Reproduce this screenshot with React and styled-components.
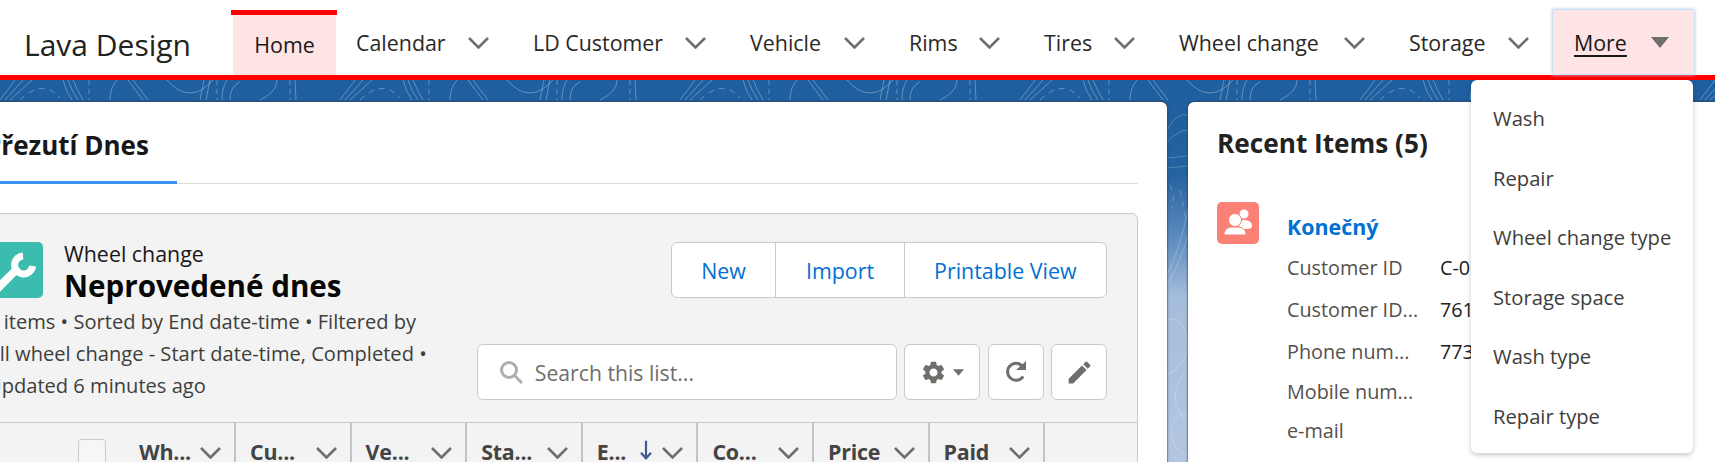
import React from 'react'
import styled, { createGlobalStyle } from 'styled-components'
import { MdSettings, MdEdit } from 'react-icons/md'

const GlobalStyle = createGlobalStyle`
  html, body { margin: 0; padding: 0; background: #fff; }
  body { font-family: "Open Sans", "Noto Sans", sans-serif; color: #181818; }
`

const Page = styled.div`
  position: relative;
  width: 1715px;
  height: 462px;
  overflow: hidden;
`
const NavBar = styled.nav`
  position: relative;
  z-index: 2;
  display: flex;
  align-items: stretch;
  height: 80px;
  box-sizing: border-box;
  border-bottom: 5px solid #f00;
  padding-top: 10px;
  background: #fff;
`
const Brand = styled.div`
  width: 233px;
  box-sizing: border-box;
  padding-left: 24px;
  font-size: 30px;
  line-height: 70px;
  color: #222;
`
const HomeTab = styled.div`
  position: relative;
  width: 103px;
  text-align: center;
  font-size: 21.4px;
  line-height: 60px;
  margin-top: 5px;
  background: #fee4e4;
  &::before {
    content: '';
    position: absolute;
    left: -2px;
    right: -1px;
    top: -5px;
    height: 5px;
    background: #f00;
  }
`
const NavItem = styled.div`
  display: flex;
  align-items: center;
  justify-content: space-between;
  box-sizing: border-box;
  width: ${p => p.$w}px;
  padding: 0 24px 0 20px;
  font-size: 21.4px;
  color: #2b2826;
`
const MoreTab = styled.div`
  position: relative;
  display: flex;
  align-items: center;
  justify-content: space-between;
  box-sizing: border-box;
  width: 141px;
  height: 64px;
  padding: 0 25px 0 21px;
  font-size: 21.4px;
  background: #fee4e4;
  box-shadow: 0 0 3px 1px #a6d0f5;
  span { text-decoration: underline; text-underline-offset: 4px; }
`
const MoreMenu = styled.ul`
  position: absolute;
  top: 70px;
  right: 1px;
  width: 222px;
  height: 373px;
  box-sizing: border-box;
  margin: 0;
  padding: 9px 0 0 22px;
  list-style: none;
  background: #fff;
  border-radius: 6px;
  box-shadow: 0 2px 5px rgba(0, 0, 0, 0.22);
  font-size: 20.2px;
  color: #3e3e3c;
`
const MenuItem = styled.li`
  height: 59.6px;
  line-height: 59.6px;
`
const Backdrop = styled.svg`
  position: absolute;
  left: 0;
  top: 80px;
  width: 1715px;
  height: 382px;
`
const Main = styled.main`
  position: relative;
  z-index: 1;
  display: flex;
  gap: 21px;
  margin-left: -63px;
  padding-top: 22px;
`
const Card = styled.section`
  background: #fff;
  border-radius: 6px 6px 0 0;
  box-shadow: 0 0 1.5px 0.5px rgba(60, 60, 60, 0.55);
  height: 400px;
`
const LeftCard = styled(Card)`
  width: 1230px;
  flex: none;
  box-sizing: border-box;
  padding: 0 29px 0 28px;
`
const RightCard = styled(Card)`
  flex: none;
  width: 560px;
  box-sizing: border-box;
  padding: 0 0 0 29px;
`
const Tabs = styled.div`
  height: 82px;
  box-sizing: border-box;
  border-bottom: 1px solid #ddd;
`
const ActiveTab = styled.div`
  width: 212px;
  height: 82px;
  box-sizing: border-box;
  padding: 25px 0 0 20px;
  border-bottom: 3px solid #3b93f8;
  font-size: 26px;
  font-weight: 700;
  line-height: 36px;
  white-space: nowrap;
`
const ListPanel = styled.div`
  margin-top: 29px;
  background: #f3f3f3;
  border: 1px solid #c9c9c9;
  border-radius: 6px 6px 0 0;
  height: 300px;
  overflow: hidden;
`
const ListHead = styled.header`
  display: flex;
  justify-content: space-between;
  height: 209px;
  box-sizing: border-box;
  padding: 28px 30px 0 21px;
  border-bottom: 1px solid #c9c9c9;
`
const TitleBlock = styled.div`
  width: 450px;
`
const TitleRow = styled.div`
  display: flex;
  gap: 21px;
`
const IconBox = styled.div`
  flex: none;
  display: flex;
  width: ${p => p.$size}px;
  height: ${p => p.$size}px;
  background: ${p => p.$bg};
  border-radius: 5px;
`
const Eyebrow = styled.div`
  font-size: 21.4px;
  line-height: 24px;
`
const ListTitle = styled.h1`
  margin: 0;
  font-size: 29.6px;
  font-weight: 700;
  line-height: 40px;
  color: #080707;
`
const Meta = styled.p`
  margin: 0;
  font-size: 20.1px;
  line-height: 32px;
  color: #3e3e3c;
`
const Controls = styled.div`
  display: flex;
  flex-direction: column;
  justify-content: space-between;
  align-items: flex-end;
  height: 158px;
`
const ButtonGroup = styled.div`
  display: flex;
  height: 56px;
  box-sizing: border-box;
  background: #fff;
  border: 1px solid #c9c9c9;
  border-radius: 6px;
`
const GroupButton = styled.div`
  display: flex;
  align-items: center;
  box-sizing: border-box;
  padding: 0 29.5px;
  font-size: 21.4px;
  color: #0070d2;
  & + & { border-left: 1px solid #c9c9c9; }
`
const Toolbar = styled.div`
  display: flex;
  gap: 7.4px;
`
const SearchBox = styled.div`
  display: flex;
  align-items: center;
  gap: 12px;
  width: 420px;
  height: 56px;
  box-sizing: border-box;
  padding-left: 21px;
  background: #fff;
  border: 1px solid #c9c9c9;
  border-radius: 6px;
  font-size: 21.2px;
  color: #706e6b;
`
const IconButton = styled.div`
  display: flex;
  align-items: center;
  justify-content: center;
  gap: 6px;
  width: ${p => p.$w}px;
  height: 56px;
  box-sizing: border-box;
  background: #fff;
  border: 1px solid #c9c9c9;
  border-radius: 6px;
  color: #706e6b;
`
const HeaderRow = styled.div`
  display: flex;
  height: 60px;
`
const CheckBox = styled.div`
  width: 28px;
  height: 28px;
  box-sizing: border-box;
  margin-top: 1px;
  background: #f6f6f6;
  border: 1px solid #c9c9c9;
  border-radius: 3px;
`
const HeaderCell = styled.div`
  display: flex;
  align-items: flex-start;
  justify-content: space-between;
  box-sizing: border-box;
  width: ${p => p.$w || 115.6}px;
  padding: 15px 13px 0 14px;
  font-size: 21.4px;
  font-weight: 700;
  letter-spacing: -0.2px;
  line-height: 28px;
  color: #444;
  white-space: nowrap;
  border-right: 2px solid #c4c4c4;
`
const SelectHeader = styled(HeaderCell)`
  padding-left: 112px;
`
const HeaderLabel = styled.div`
  display: flex;
  align-items: flex-start;
  gap: 9px;
`
const ColumnChevron = styled.span`
  display: flex;
  margin-top: 9px;
`
const SortGroup = styled.div`
  display: flex;
  align-items: flex-start;
  gap: 9px;
`
const SortArrow = styled.svg`
  margin-top: 1px;
`
const RecentTitle = styled.h2`
  margin: 0;
  padding-top: 24px;
  font-size: 26.2px;
  font-weight: 700;
  line-height: 34px;
  color: #222;
`
const RecentItem = styled.div`
  display: flex;
  gap: 28px;
  margin-top: 42px;
`
const RecentBody = styled.div`
  padding-top: 10px;
`
const RecentName = styled.a`
  display: block;
  font-size: 21.4px;
  font-weight: 700;
  line-height: 30px;
  color: #0070d2;
`
const DetailRow = styled.div`
  display: grid;
  grid-template-columns: 153px auto;
  height: ${p => (p.$filled ? 42 : 38.5)}px;
  align-items: center;
  font-size: 19.8px;
  color: #54504d;
  b { font-weight: 400; color: #222; }
`
const DetailList = styled.div`
  margin-top: 4.5px;
`

const Chevron = ({ w = 21, h = 12 }) => (
  <svg width={w} height={h} viewBox="0 0 21 12" fill="none" stroke="#706e6b" strokeWidth="2.6">
    <polyline points="1,1 10.5,10.5 20,1" />
  </svg>
)

const Caret = ({ w, h, color = '#706e6b' }) => (
  <svg width={w} height={h} viewBox="0 0 10 6">
    <polygon points="0,0 10,0 5,6" fill={color} />
  </svg>
)

const SearchIcon = () => (
  <svg width="24" height="24" viewBox="0 0 24 24" fill="none" stroke="#b0adab" strokeWidth="3">
    <circle cx="10" cy="10" r="7.5" />
    <line x1="15.5" y1="15.5" x2="23" y2="23" />
  </svg>
)

const RefreshIcon = () => (
  <svg width="22" height="22" viewBox="0 0 22 22" fill="none">
    <path d="M18.5 6.5 A8.5 8.5 0 1 0 18.2 15.5" stroke="#706e6b" strokeWidth="3" />
    <polygon points="11,9 21,9 21,0" fill="#706e6b" />
  </svg>
)

const WrenchIcon = () => (
  <svg width="56" height="56" viewBox="0 0 56 56" fill="none" stroke="#fff">
    <line x1="29" y1="28" x2="7" y2="50" strokeWidth="8" strokeLinecap="round" />
    <path d="M36 14 A9 9 0 1 0 45.5 24" strokeWidth="7" />
  </svg>
)

const PeopleIcon = () => (
  <svg width="42" height="42" viewBox="0 0 42 42" fill="#fff">
    <circle cx="27" cy="12" r="4.5" />
    <path d="M22 24 Q20 18 27 18 Q35 18 35 24 Q35 27 30 27 L25 27 Z" />
    <circle cx="18" cy="18" r="6.5" stroke="#fb8075" strokeWidth="1" />
    <path d="M7 33 L7 31 Q8 26 14 25 L22 25 Q28 26 29 31 L29 33 Z" stroke="#fb8075" strokeWidth="1" />
  </svg>
)

// contour lines for the page background
const ContourBackdrop = () => (
  <Backdrop viewBox="0 0 1715 382" preserveAspectRatio="none">
    <defs>
      <linearGradient id="sky" x1="0" y1="0" x2="0" y2="1">
        <stop offset="0" stopColor="#1e5f9f" />
        <stop offset="0.24" stopColor="#23619f" />
        <stop offset="0.42" stopColor="#5f8dc0" />
        <stop offset="0.57" stopColor="#a5bddc" />
        <stop offset="1" stopColor="#b2c6e1" />
      </linearGradient>
      <pattern id="contours" width="340" height="22" patternUnits="userSpaceOnUse">
        <g fill="none" stroke="#fff" strokeOpacity="0.3" strokeWidth="1">
          <path d="M0 20 L15 0 M5 20 L23 0 M10 20 L32 0" />
          <path d="M20 20 Q43 -2 60 18" strokeDasharray="6 5" />
          <path d="M63 0 Q66 12 72 20 M68 0 Q72 12 78 20 M73 0 Q78 12 83 20" />
          <path d="M89 0 L89 20" strokeDasharray="5 4" />
          <path d="M117 0 Q110 8 110 20" />
          <path d="M128 0 L143 20 M133 0 L148 20" />
          <path d="M167 0 Q190 26 213 0" />
          <path d="M204 0 L200 20 M210 0 L206 20" />
          <path d="M217 0 L217 20" strokeDasharray="5 4" />
          <path d="M227 0 Q222 8 222 20 M240 2 Q230 6 230 20" />
          <path d="M277 0 Q277 12 260 20" />
          <path d="M290 0 L290 20" strokeDasharray="5 4" />
          <path d="M295 0 L296 20" />
        </g>
      </pattern>
    </defs>
    <rect width="1715" height="382" fill="url(#sky)" />
    <rect width="1715" height="22" fill="url(#contours)" />
    <g fill="none" stroke="#fff" strokeOpacity="0.22" strokeWidth="1">
      <path d="M1167 50 Q1178 30 1189 36 M1167 62 Q1178 50 1189 50 M1167 78 L1189 76 M1167 88 L1189 86" />
      <path d="M1170 105 Q1176 120 1172 128 M1180 110 L1186 140" strokeDasharray="6 5" />
      <path d="M1167 195 Q1180 170 1189 125 M1167 205 Q1182 180 1189 150" />
      <path d="M1167 295 Q1195 280 1185 250 Q1178 235 1167 240" />
      <path d="M1189 290 Q1172 300 1176 325 L1184 340" />
      <path d="M1189 375 Q1170 372 1172 345 Q1178 330 1189 335" />
    </g>
  </Backdrop>
)

const navItems = [
  ['Calendar', 177],
  ['LD Customer', 217],
  ['Vehicle', 159],
  ['Rims', 135],
  ['Tires', 135],
  ['Wheel change', 230],
  ['Storage', 164],
]

const menuItems = ['Wash', 'Repair', 'Wheel change type', 'Storage space', 'Wash type', 'Repair type']

const columns = ['Cu...', 'Ve...', 'Sta...']

const details = [
  ['Customer ID', 'C-000'],
  ['Customer ID...', '761'],
  ['Phone num...', '773'],
  ['Mobile num...', ''],
  ['e-mail', ''],
]

const HeadChevron = () => <ColumnChevron><Chevron /></ColumnChevron>

export default function App() {
  return (
    <Page>
      <GlobalStyle />
      <NavBar>
        <Brand>Lava Design</Brand>
        <HomeTab>Home</HomeTab>
        {navItems.map(([label, w]) => (
          <NavItem key={label} $w={w}>
            {label}
            <Chevron />
          </NavItem>
        ))}
        <MoreTab>
          <span>More</span>
          <Caret w={18} h={11} />
          <MoreMenu>
            {menuItems.map(item => <MenuItem key={item}>{item}</MenuItem>)}
          </MoreMenu>
        </MoreTab>
      </NavBar>
      <ContourBackdrop />
      <Main>
        <LeftCard>
          <Tabs>
            <ActiveTab>Přezutí Dnes</ActiveTab>
          </Tabs>
          <ListPanel>
            <ListHead>
              <TitleBlock>
                <TitleRow>
                  <IconBox $size={56} $bg="#3cbcae"><WrenchIcon /></IconBox>
                  <div>
                    <Eyebrow>Wheel change</Eyebrow>
                    <ListTitle>Neprovedené dnes</ListTitle>
                  </div>
                </TitleRow>
                <Meta>
                  0 items • Sorted by End date-time • Filtered by<br />
                  All wheel change - Start date-time, Completed •<br />
                  Updated 6 minutes ago
                </Meta>
              </TitleBlock>
              <Controls>
                <ButtonGroup>
                  <GroupButton>New</GroupButton>
                  <GroupButton>Import</GroupButton>
                  <GroupButton>Printable View</GroupButton>
                </ButtonGroup>
                <Toolbar>
                  <SearchBox>
                    <SearchIcon />
                    Search this list...
                  </SearchBox>
                  <IconButton $w={76}>
                    <MdSettings size={27} />
                    <Caret w={11} h={7} />
                  </IconButton>
                  <IconButton $w={56}><RefreshIcon /></IconButton>
                  <IconButton $w={56}><MdEdit size={29} /></IconButton>
                </Toolbar>
              </Controls>
            </ListHead>
            <HeaderRow>
              <SelectHeader $w={270}>
                <CheckBox />
                <HeaderLabel>Wh...<HeadChevron /></HeaderLabel>
              </SelectHeader>
              {columns.map(name => (
                <HeaderCell key={name}>{name}<HeadChevron /></HeaderCell>
              ))}
              <HeaderCell>
                E...
                <SortGroup>
                  <SortArrow width="14" height="22" viewBox="0 0 14 24" fill="none" stroke="#3f5c94" strokeWidth="2.4">
                    <path d="M7 2 L7 21 M1.5 15 L7 21 L12.5 15" />
                  </SortArrow>
                  <HeadChevron />
                </SortGroup>
              </HeaderCell>
              <HeaderCell>Co...<HeadChevron /></HeaderCell>
              <HeaderCell>Price<HeadChevron /></HeaderCell>
              <HeaderCell>Paid<HeadChevron /></HeaderCell>
            </HeaderRow>
          </ListPanel>
        </LeftCard>
        <RightCard>
          <RecentTitle>Recent Items (5)</RecentTitle>
          <RecentItem>
            <IconBox $size={42} $bg="#fb8075"><PeopleIcon /></IconBox>
            <RecentBody>
              <RecentName>Konečný</RecentName>
              <DetailList>
                {details.map(([label, value]) => (
                  <DetailRow key={label} $filled={value !== ''}>
                    <span>{label}</span>
                    <b>{value}</b>
                  </DetailRow>
                ))}
              </DetailList>
            </RecentBody>
          </RecentItem>
        </RightCard>
      </Main>
    </Page>
  )
}
